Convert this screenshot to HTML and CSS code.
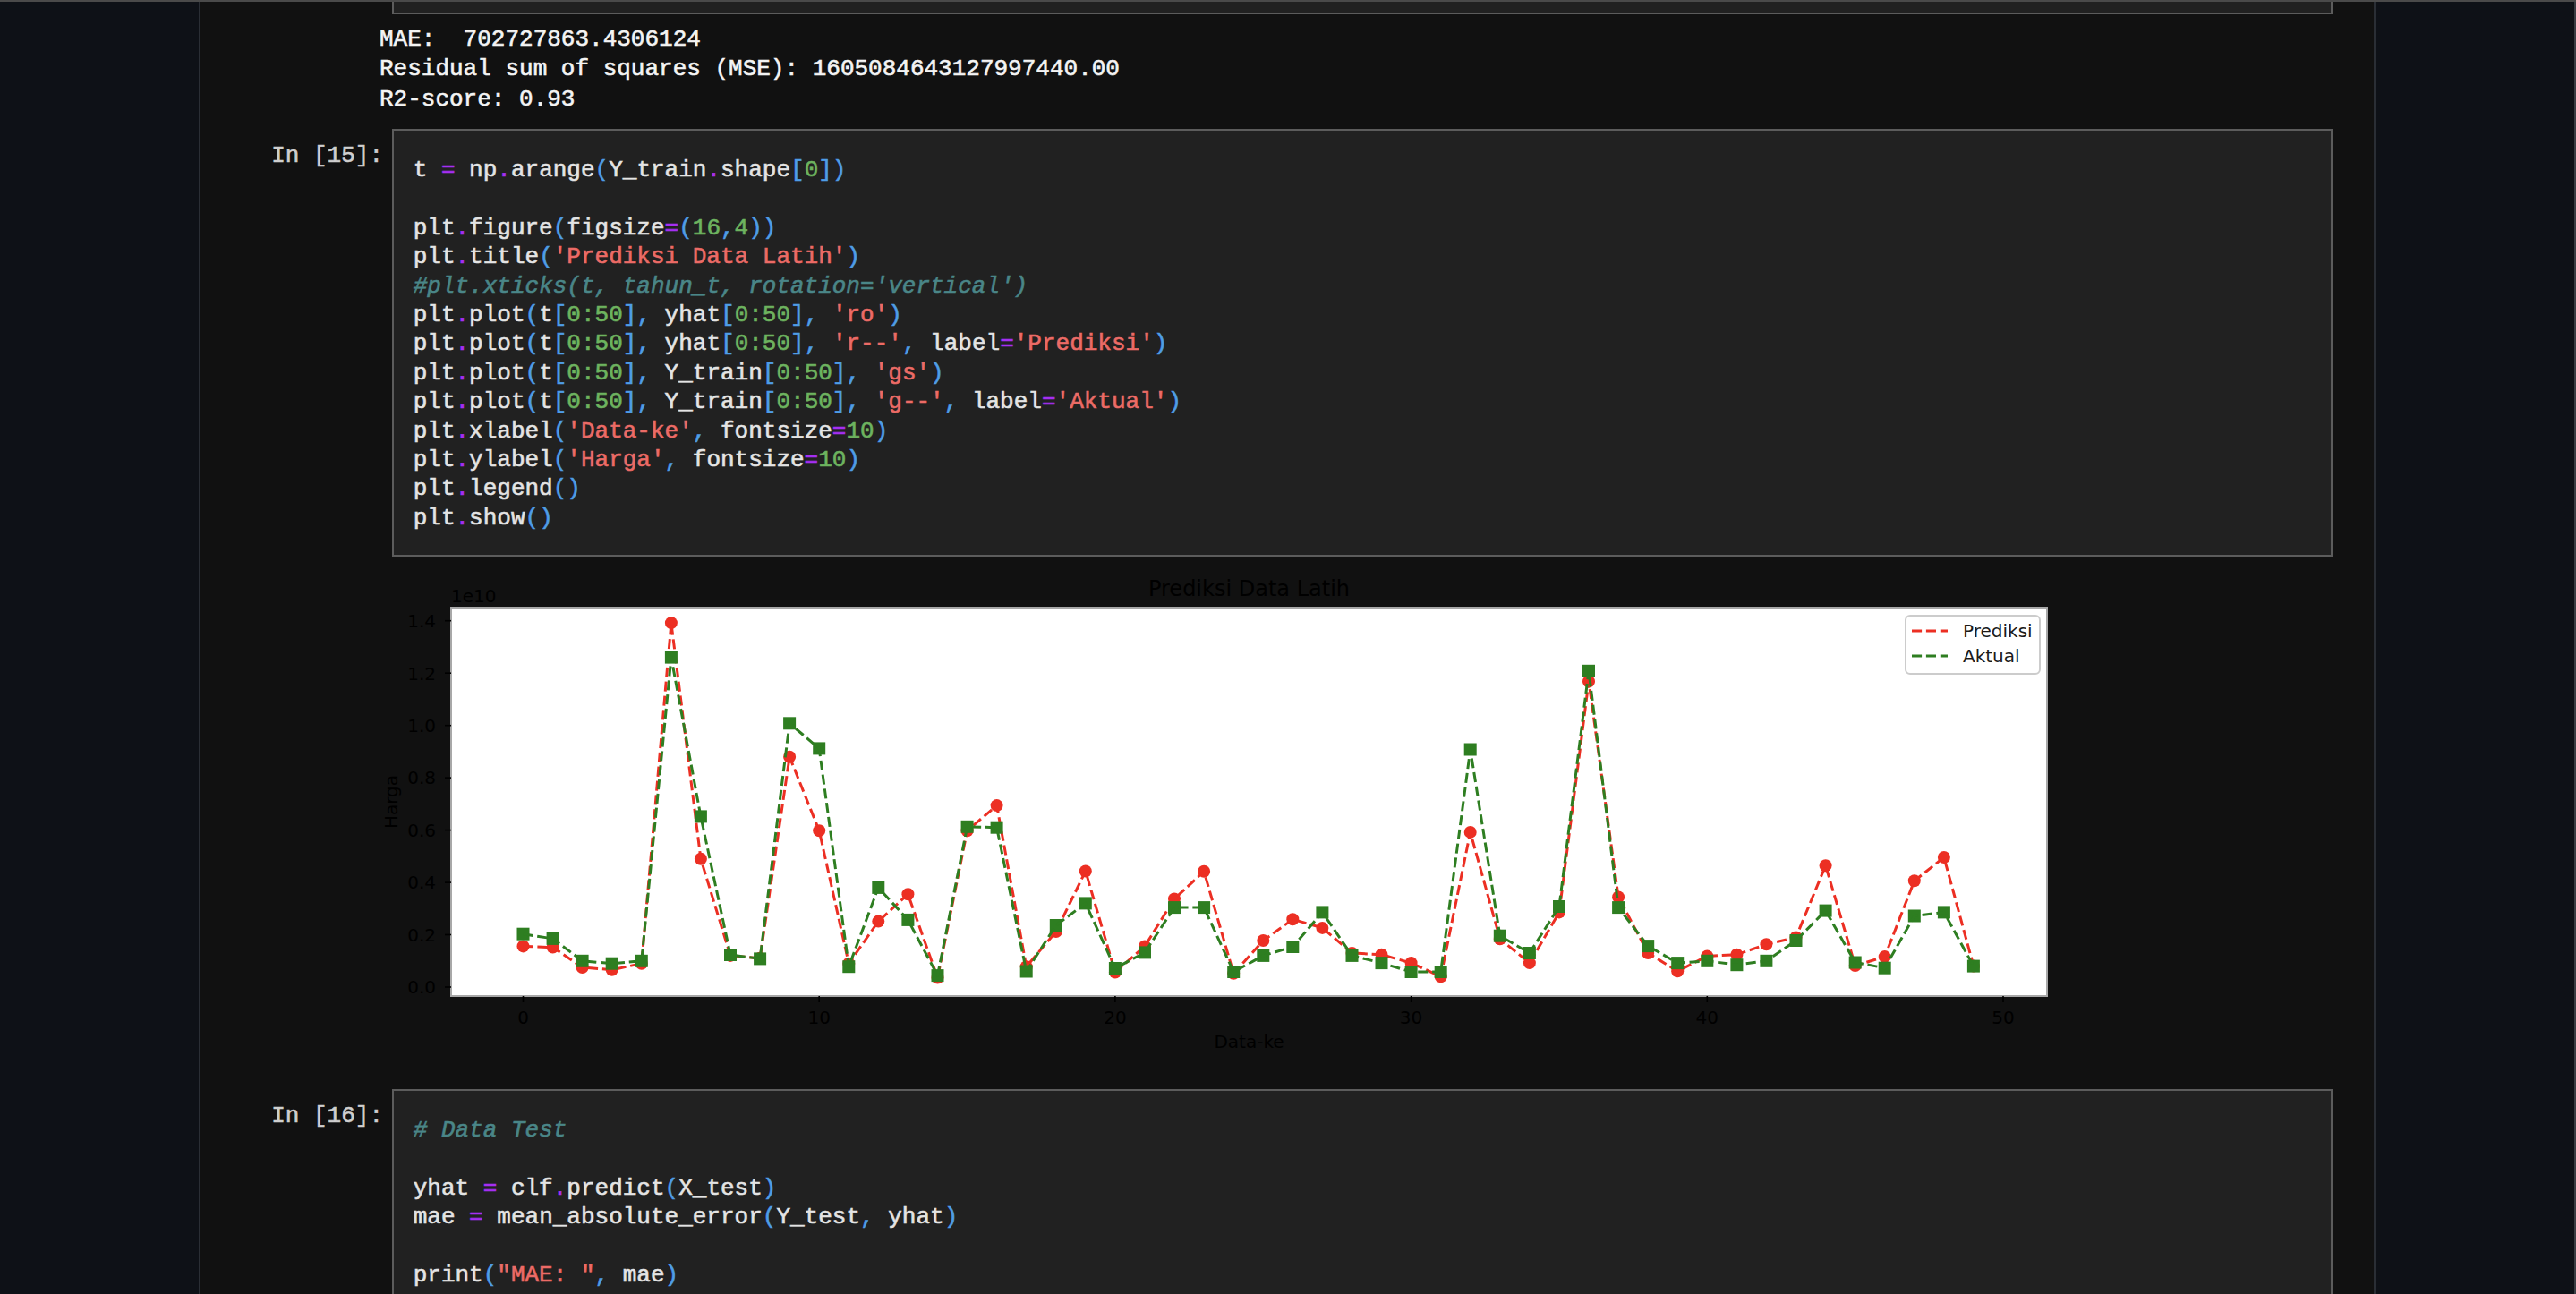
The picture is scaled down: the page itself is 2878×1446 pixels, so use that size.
FILE: index.html
```html
<!DOCTYPE html>
<html lang="en">
<head>
<meta charset="utf-8">
<title>Notebook</title>
<link rel="stylesheet" href="styles.css">
</head>
<body>
<div class="topbar"></div>
<div class="page">
  <div class="gutter"></div>
  <main class="notebook">
    <div class="prev-box"></div>
    <pre class="out-text">MAE:  702727863.4306124
Residual sum of squares (MSE): 1605084643127997440.00
R2-score: 0.93</pre>

    <div class="cell">
      <div class="prompt">In [15]:</div>
<pre class="code">t <span class="o">=</span> np<span class="o">.</span>arange<span class="p">(</span>Y_train<span class="o">.</span>shape<span class="p">[</span><span class="n">0</span><span class="p">])</span>

plt<span class="o">.</span>figure<span class="p">(</span>figsize<span class="o">=</span><span class="p">(</span><span class="n">16</span><span class="p">,</span><span class="n">4</span><span class="p">))</span>
plt<span class="o">.</span>title<span class="p">(</span><span class="s">'Prediksi Data Latih'</span><span class="p">)</span>
<span class="c">#plt.xticks(t, tahun_t, rotation='vertical')</span>
plt<span class="o">.</span>plot<span class="p">(</span>t<span class="p">[</span><span class="n">0:50</span><span class="p">],</span> yhat<span class="p">[</span><span class="n">0:50</span><span class="p">],</span> <span class="s">'ro'</span><span class="p">)</span>
plt<span class="o">.</span>plot<span class="p">(</span>t<span class="p">[</span><span class="n">0:50</span><span class="p">],</span> yhat<span class="p">[</span><span class="n">0:50</span><span class="p">],</span> <span class="s">'r--'</span><span class="p">,</span> label<span class="o">=</span><span class="s">'Prediksi'</span><span class="p">)</span>
plt<span class="o">.</span>plot<span class="p">(</span>t<span class="p">[</span><span class="n">0:50</span><span class="p">],</span> Y_train<span class="p">[</span><span class="n">0:50</span><span class="p">],</span> <span class="s">'gs'</span><span class="p">)</span>
plt<span class="o">.</span>plot<span class="p">(</span>t<span class="p">[</span><span class="n">0:50</span><span class="p">],</span> Y_train<span class="p">[</span><span class="n">0:50</span><span class="p">],</span> <span class="s">'g--'</span><span class="p">,</span> label<span class="o">=</span><span class="s">'Aktual'</span><span class="p">)</span>
plt<span class="o">.</span>xlabel<span class="p">(</span><span class="s">'Data-ke'</span><span class="p">,</span> fontsize<span class="o">=</span><span class="n">10</span><span class="p">)</span>
plt<span class="o">.</span>ylabel<span class="p">(</span><span class="s">'Harga'</span><span class="p">,</span> fontsize<span class="o">=</span><span class="n">10</span><span class="p">)</span>
plt<span class="o">.</span>legend<span class="p">()</span>
plt<span class="o">.</span>show<span class="p">()</span></pre>
    </div>

    <div class="out-plot">
      <svg class="plot" width="1900" height="568" viewBox="424 622 1900 568" xmlns="http://www.w3.org/2000/svg">
        <defs>
          <marker id="mc" markerUnits="userSpaceOnUse" markerWidth="16" markerHeight="16" viewBox="0 0 16 16" refX="8" refY="8">
            <circle cx="8" cy="8" r="7" fill="#ec2f23"/>
          </marker>
          <marker id="ms" markerUnits="userSpaceOnUse" markerWidth="16" markerHeight="16" viewBox="0 0 16 16" refX="8" refY="8">
            <rect x="1" y="1" width="14" height="14" fill="#2e7e21"/>
          </marker>
        </defs>
        <text class="title" x="1395.5" y="666">Prediksi Data Latih</text>
        <text class="lbl" x="504" y="673">1e10</text>
        <rect class="axes" x="504" y="679" width="1783" height="434"/>

        <g class="ticks">
          <line x1="497" y1="1103" x2="504" y2="1103"/>
          <line x1="497" y1="1044.5" x2="504" y2="1044.5"/>
          <line x1="497" y1="986.1" x2="504" y2="986.1"/>
          <line x1="497" y1="927.6" x2="504" y2="927.6"/>
          <line x1="497" y1="869.1" x2="504" y2="869.1"/>
          <line x1="497" y1="810.7" x2="504" y2="810.7"/>
          <line x1="497" y1="752.2" x2="504" y2="752.2"/>
          <line x1="497" y1="693.7" x2="504" y2="693.7"/>
          <line x1="584.5" y1="1113" x2="584.5" y2="1120"/>
          <line x1="915.2" y1="1113" x2="915.2" y2="1120"/>
          <line x1="1245.9" y1="1113" x2="1245.9" y2="1120"/>
          <line x1="1576.6" y1="1113" x2="1576.6" y2="1120"/>
          <line x1="1907.3" y1="1113" x2="1907.3" y2="1120"/>
          <line x1="2238" y1="1113" x2="2238" y2="1120"/>
        </g>
        <g class="ytl">
          <text x="487" y="1110.3">0.0</text>
          <text x="487" y="1051.8">0.2</text>
          <text x="487" y="993.4">0.4</text>
          <text x="487" y="934.9">0.6</text>
          <text x="487" y="876.4">0.8</text>
          <text x="487" y="818">1.0</text>
          <text x="487" y="759.5">1.2</text>
          <text x="487" y="701">1.4</text>
        </g>
        <g class="xtl">
          <text x="584.5" y="1144">0</text>
          <text x="915.2" y="1144">10</text>
          <text x="1245.9" y="1144">20</text>
          <text x="1576.6" y="1144">30</text>
          <text x="1907.3" y="1144">40</text>
          <text x="2238" y="1144">50</text>
        </g>
        <text class="xlabel" x="1395.5" y="1171">Data-ke</text>
        <text class="ylabel" transform="translate(444 896) rotate(-90)">Harga</text>

        <polyline class="pts-red" points="584.5,1057.4 617.6,1058.6 650.6,1081.1 683.7,1083.7 716.8,1076.7 749.9,696.1 782.9,959.7 816.0,1067.9 849.1,1070.8 882.1,845.7 915.2,928.2 948.3,1076.7 981.3,1029.6 1014.4,999.2 1047.5,1092.5 1080.6,928.2 1113.6,900.1 1146.7,1080.2 1179.8,1041.0 1212.8,973.5 1245.9,1086.6 1279.0,1057.4 1312.0,1004.5 1345.1,973.8 1378.2,1087.8 1411.3,1051.0 1444.3,1027.3 1477.4,1036.9 1510.5,1065.0 1543.5,1066.7 1576.6,1076.1 1609.7,1091.3 1642.7,929.9 1675.8,1049.2 1708.9,1076.1 1742.0,1019.4 1775.0,761.5 1808.1,1002.4 1841.2,1065.0 1874.2,1085.2 1907.3,1068.5 1940.4,1066.7 1973.4,1055.3 2006.5,1047.5 2039.6,967.3 2072.7,1079.0 2105.7,1069.1 2138.8,984.3 2171.9,958.0 2204.9,1079.6"/>
        <polyline class="line-red" points="584.5,1057.4 617.6,1058.6 650.6,1081.1 683.7,1083.7 716.8,1076.7 749.9,696.1 782.9,959.7 816.0,1067.9 849.1,1070.8 882.1,845.7 915.2,928.2 948.3,1076.7 981.3,1029.6 1014.4,999.2 1047.5,1092.5 1080.6,928.2 1113.6,900.1 1146.7,1080.2 1179.8,1041.0 1212.8,973.5 1245.9,1086.6 1279.0,1057.4 1312.0,1004.5 1345.1,973.8 1378.2,1087.8 1411.3,1051.0 1444.3,1027.3 1477.4,1036.9 1510.5,1065.0 1543.5,1066.7 1576.6,1076.1 1609.7,1091.3 1642.7,929.9 1675.8,1049.2 1708.9,1076.1 1742.0,1019.4 1775.0,761.5 1808.1,1002.4 1841.2,1065.0 1874.2,1085.2 1907.3,1068.5 1940.4,1066.7 1973.4,1055.3 2006.5,1047.5 2039.6,967.3 2072.7,1079.0 2105.7,1069.1 2138.8,984.3 2171.9,958.0 2204.9,1079.6"/>
        <polyline class="pts-green" points="584.5,1043.7 617.6,1048.9 650.6,1073.8 683.7,1076.7 716.8,1073.8 749.9,734.6 782.9,912.4 816.0,1067.0 849.1,1071.4 882.1,808.3 915.2,836.4 948.3,1080.2 981.3,991.9 1014.4,1027.9 1047.5,1090.1 1080.6,923.8 1113.6,924.7 1146.7,1085.5 1179.8,1034.0 1212.8,1009.4 1245.9,1082.0 1279.0,1064.4 1312.0,1014.1 1345.1,1014.1 1378.2,1086.0 1411.3,1067.9 1444.3,1058.0 1477.4,1019.4 1510.5,1067.9 1543.5,1076.1 1576.6,1086.0 1609.7,1086.0 1642.7,837.5 1675.8,1045.7 1708.9,1065.0 1742.0,1013.0 1775.0,749.8 1808.1,1014.1 1841.2,1057.1 1874.2,1076.1 1907.3,1073.8 1940.4,1078.2 1973.4,1073.8 2006.5,1051.0 2039.6,1017.6 2072.7,1075.5 2105.7,1081.7 2138.8,1023.5 2171.9,1019.4 2204.9,1079.6"/>
        <polyline class="line-green" points="584.5,1043.7 617.6,1048.9 650.6,1073.8 683.7,1076.7 716.8,1073.8 749.9,734.6 782.9,912.4 816.0,1067.0 849.1,1071.4 882.1,808.3 915.2,836.4 948.3,1080.2 981.3,991.9 1014.4,1027.9 1047.5,1090.1 1080.6,923.8 1113.6,924.7 1146.7,1085.5 1179.8,1034.0 1212.8,1009.4 1245.9,1082.0 1279.0,1064.4 1312.0,1014.1 1345.1,1014.1 1378.2,1086.0 1411.3,1067.9 1444.3,1058.0 1477.4,1019.4 1510.5,1067.9 1543.5,1076.1 1576.6,1086.0 1609.7,1086.0 1642.7,837.5 1675.8,1045.7 1708.9,1065.0 1742.0,1013.0 1775.0,749.8 1808.1,1014.1 1841.2,1057.1 1874.2,1076.1 1907.3,1073.8 1940.4,1078.2 1973.4,1073.8 2006.5,1051.0 2039.6,1017.6 2072.7,1075.5 2105.7,1081.7 2138.8,1023.5 2171.9,1019.4 2204.9,1079.6"/>

        <g class="legend">
          <rect class="legend-box" x="2129" y="688" width="150" height="65" rx="5"/>
          <line class="lg-red" x1="2136" y1="705" x2="2176" y2="705"/>
          <line class="lg-green" x1="2136" y1="733" x2="2176" y2="733"/>
          <text class="lg-text" x="2193" y="712">Prediksi</text>
          <text class="lg-text" x="2193" y="740">Aktual</text>
        </g>
      </svg>
    </div>

    <div class="cell">
      <div class="prompt">In [16]:</div>
<pre class="code code-last"><span class="c"># Data Test</span>

yhat <span class="o">=</span> clf<span class="o">.</span>predict<span class="p">(</span>X_test<span class="p">)</span>
mae <span class="o">=</span> mean_absolute_error<span class="p">(</span>Y_test<span class="p">,</span> yhat<span class="p">)</span>

print<span class="p">(</span><span class="s">"MAE: "</span><span class="p">,</span> mae<span class="p">)</span></pre>
    </div>
  </main>
  <div class="gutter"></div>
  <div class="edge"></div>
</div>
</body>
</html>
```

FILE: styles.css
```css
html, body {
  margin: 0;
  padding: 0;
}

body {
  background: #0e1117;
  height: 1446px;
  overflow: hidden;
  font-family: "Liberation Mono", "DejaVu Sans Mono", monospace;
}

.topbar {
  height: 2px;
  background: #4a4a4a;
}

.page {
  display: flex;
  height: 1444px;
}

.gutter {
  width: 222px;
  flex: none;
}

.notebook {
  width: 2428px;
  flex: none;
  background: #111111;
  border-left: 2px solid #2a2e35;
  border-right: 2px solid #2a2e35;
  overflow: hidden;
}

.edge {
  width: 2px;
  flex: none;
  background: #3a3d43;
}

.prev-box {
  margin-left: 214px;
  width: 2168px;
  height: 14px;
  box-sizing: border-box;
  background: #212121;
  border: 2px solid #5c5c5c;
  border-top: none;
}

.out-text {
  margin: 11.5px 0 16px 200px;
  font-family: inherit;
  font-size: 26px;
  line-height: 33.5px;
  color: #f4f4f4;
  -webkit-text-stroke: 0.6px currentColor;
  white-space: pre;
}

.cell {
  display: flex;
  align-items: flex-start;
}

.prompt {
  flex: none;
  width: 214px;
  box-sizing: border-box;
  padding: 13.5px 10px 0 0;
  text-align: right;
  color: #cfcfcf;
  font-size: 26px;
  line-height: 32.4px;
  white-space: pre;
  -webkit-text-stroke: 0.6px currentColor;
}

.code {
  flex: none;
  margin: 0;
  width: 2168px;
  box-sizing: border-box;
  padding: 28px 0 24.8px 21.7px;
  background: #212121;
  border: 2px solid #5c5c5c;
  font-family: inherit;
  font-size: 26px;
  line-height: 32.4px;
  color: #e4e4e4;
  white-space: pre;
  -webkit-text-stroke: 0.6px currentColor;
}

.code-last {
  padding-bottom: 80px;
}

.o { color: #a52ff2; }
.p { color: #4f9de6; }
.n { color: #6db35f; }
.s { color: #ec6b66; }
.c { color: #4a8688; font-style: italic; }

.out-plot {
  padding-left: 200px;
  margin-bottom: 27px;
}

.plot {
  display: block;
  font-family: "DejaVu Sans", sans-serif;
}

.plot text {
  fill: #000000;
  font-size: 20px;
}

.plot .title {
  font-size: 24px;
  text-anchor: middle;
}

.plot .xlabel,
.plot .ylabel {
  text-anchor: middle;
}

.ytl text { text-anchor: end; }
.xtl text { text-anchor: middle; }

.axes {
  fill: #ffffff;
  stroke: #a8a8a8;
  stroke-width: 2;
}

.ticks line {
  stroke: #000000;
  stroke-width: 1.6;
}

.pts-red {
  fill: none;
  stroke: none;
  marker-start: url(#mc);
  marker-mid: url(#mc);
  marker-end: url(#mc);
}

.pts-green {
  fill: none;
  stroke: none;
  marker-start: url(#ms);
  marker-mid: url(#ms);
  marker-end: url(#ms);
}

.line-red,
.line-green,
.lg-red,
.lg-green {
  fill: none;
  stroke-width: 3;
  stroke-dasharray: 11.1 4.8;
  stroke-linejoin: round;
}

.line-red, .lg-red { stroke: #ec2f23; }
.line-green, .lg-green { stroke: #2e7e21; }

.legend-box {
  fill: rgba(255, 255, 255, 0.8);
  stroke: #cccccc;
  stroke-width: 2;
}

.plot .lg-text {
  fill: #1a1a1a;
}
```
